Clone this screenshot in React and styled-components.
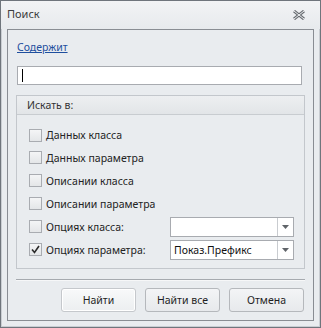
import React from "react";
import styled, { createGlobalStyle } from "styled-components";

const Global = createGlobalStyle`
  html, body { margin: 0; padding: 0; background: #e9ecef; }
  body { font-family: "Noto Sans", "Liberation Sans", sans-serif; font-size: 10.5px; color: #1e1e1e; }
`;

const Win = styled.div`
  box-sizing: border-box;
  width: 321px;
  height: 328px;
  border: 1px solid #6f757c;
  box-shadow: inset 0 0 0 1px #c9cdd2;
  background: #e9ecef;
  display: flex;
  flex-direction: column;
  padding: 0 6px 6px 6px;
`;

const TitleBar = styled.div`
  height: 28px;
  display: flex;
  align-items: center;
  justify-content: space-between;
  margin: 0 -6px;
  padding: 0 15px 0 6px;
  background: linear-gradient(#f2f3f5, #e7eaed);
  color: #3c3c3c;
  font-size: 11px;
`;

const Title = styled.span`
  margin-top: -3px;
`;

const Panel = styled.div`
  flex: 1;
  border: 1px solid #898d93;
  display: flex;
  flex-direction: column;
  padding: 9px 9px 0 8px;
`;

const Link = styled.a`
  color: #1f4f9e;
  text-decoration: underline;
  align-self: flex-start;
  margin-left: 1px;
  line-height: 16px;
`;

const Input = styled.div`
  margin: 11px 0 0 1px;
  width: 285px;
  height: 19px;
  box-sizing: border-box;
  border: 1px solid #a8abb0;
  background: #fff;
  display: flex;
  align-items: center;
  padding-left: 4px;
`;

const Caret = styled.span`
  width: 1px;
  height: 13px;
  background: #000;
`;

const Group = styled.div`
  margin-top: 10px;
  width: 289px;
  height: 174px;
  box-sizing: border-box;
  border: 1px solid #c3c7cc;
  display: flex;
  flex-direction: column;
`;

const GroupHead = styled.div`
  height: 18px;
  background: linear-gradient(#edeff1, #e2e5e8);
  border-bottom: 1px solid #c8ccd0;
  display: flex;
  align-items: center;
  padding-left: 10px;
  color: #333;
`;

const Rows = styled.div`
  display: flex;
  flex-direction: column;
  padding: 9px 0 0 12px;
`;

const Row = styled.div`
  height: ${(p) => p.$h || 23}px;
  display: flex;
  align-items: center;
  gap: 4px;
`;

const Label = styled.span`
  width: ${(p) => (p.$w ? p.$w + "px" : "auto")};
  color: #222;
`;

const Box = styled.span`
  width: 11px;
  height: 11px;
  border: 1px solid #a9acb1;
  background: linear-gradient(#f4f5f6, #e4e6e8);
  display: inline-flex;
  align-items: center;
  justify-content: center;
  flex: none;
`;

const Combo = styled.div`
  width: 124px;
  height: 20px;
  box-sizing: border-box;
  border: 1px solid #a8abb0;
  background: #fff;
  display: flex;
  align-items: center;
`;

const ComboText = styled.span`
  flex: 1;
  padding-left: 3px;
  color: #111;
`;

const ComboBtn = styled.span`
  width: 15px;
  height: 100%;
  border-left: 1px solid #c9ccd0;
  display: flex;
  align-items: center;
  justify-content: center;
`;

const Sep = styled.div`
  margin-top: 10px;
  width: 289px;
  height: 1px;
  background: #a6aaaf;
  box-shadow: 0 1px 0 #f6f7f8;
`;

const Buttons = styled.div`
  display: flex;
  justify-content: flex-end;
  gap: 9px;
  margin-top: 8px;
  width: 288px;
`;

const Button = styled.button`
  width: 75px;
  height: 24px;
  border: 1px solid ${(p) => (p.$focus ? "#c5c8cc" : "#b5b8bc")};
  border-radius: 3px;
  background: ${(p) =>
    p.$focus ? "linear-gradient(#f8f9fa, #eceef0)" : "linear-gradient(#f3f4f6, #e7e9ec)"};
  box-shadow: ${(p) => (p.$focus ? "inset 0 0 0 1px #fff" : "none")};
  font-family: inherit;
  font-size: 10.5px;
  color: #1e1e1e;
  padding: 0;
`;

const Arrow = () => (
  <svg width="7" height="4" viewBox="0 0 7 4">
    <path d="M0 0H7L3.5 4Z" fill="#606469" />
  </svg>
);

const Check = () => (
  <svg width="9" height="9" viewBox="0 0 9 9">
    <path d="M1 4.5L3.5 7.5L8 1" fill="none" stroke="#2a2a2a" strokeWidth="1.6" />
  </svg>
);

const Close = () => (
  <svg width="12" height="10" viewBox="0 0 12 10">
    <path d="M1 1L11 9M11 1L1 9" fill="none" stroke="#6a6e73" strokeWidth="3" />
    <path d="M1 1L11 9M11 1L1 9" fill="none" stroke="#eef0f2" strokeWidth="1" />
  </svg>
);

const items = [
  { label: "Данных класса", h: 22 },
  { label: "Данных параметра" },
  { label: "Описании класса" },
  { label: "Описании параметра" },
];

export default function App() {
  return (
    <>
      <Global />
      <Win>
        <TitleBar>
          <Title>Поиск</Title>
          <Close />
        </TitleBar>
        <Panel>
          <Link href="#">Содержит</Link>
          <Input>
            <Caret />
          </Input>
          <Group>
            <GroupHead>Искать в:</GroupHead>
            <Rows>
              {items.map((it) => (
                <Row key={it.label} $h={it.h}>
                  <Box />
                  <Label>{it.label}</Label>
                </Row>
              ))}
              <Row>
                <Box />
                <Label $w={120}>Опциях класса:</Label>
                <Combo>
                  <ComboText />
                  <ComboBtn>
                    <Arrow />
                  </ComboBtn>
                </Combo>
              </Row>
              <Row>
                <Box>
                  <Check />
                </Box>
                <Label $w={120}>Опциях параметра:</Label>
                <Combo>
                  <ComboText>Показ.Префикс</ComboText>
                  <ComboBtn>
                    <Arrow />
                  </ComboBtn>
                </Combo>
              </Row>
            </Rows>
          </Group>
          <Sep />
          <Buttons>
            <Button $focus>Найти</Button>
            <Button>Найти все</Button>
            <Button>Отмена</Button>
          </Buttons>
        </Panel>
      </Win>
    </>
  );
}
